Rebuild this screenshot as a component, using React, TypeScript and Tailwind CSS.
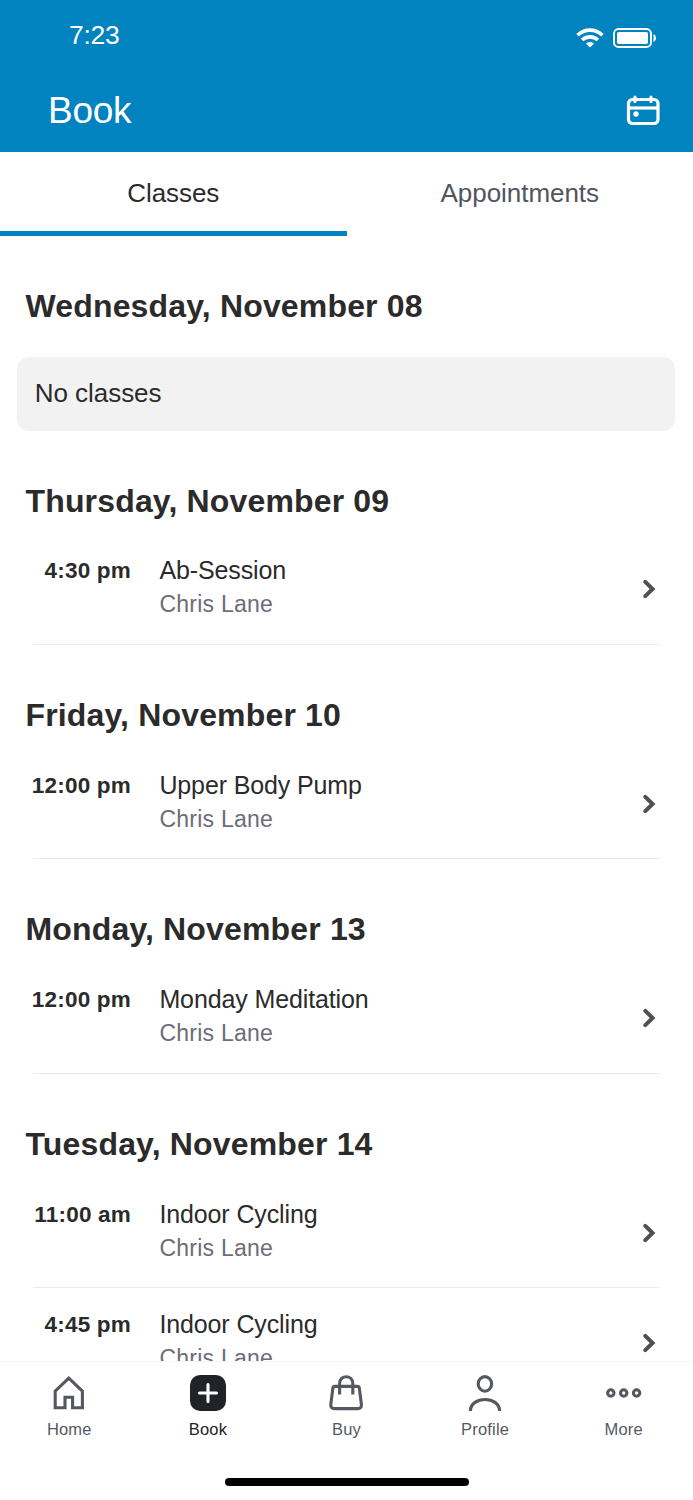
import type { ReactNode } from 'react'

type ClassItem = { time: string; name: string; teacher: string }
type Day = { label: string; classes: ClassItem[] }

const days: Day[] = [
  { label: 'Wednesday, November 08', classes: [] },
  {
    label: 'Thursday, November 09',
    classes: [{ time: '4:30 pm', name: 'Ab-Session', teacher: 'Chris Lane' }],
  },
  {
    label: 'Friday, November 10',
    classes: [{ time: '12:00 pm', name: 'Upper Body Pump', teacher: 'Chris Lane' }],
  },
  {
    label: 'Monday, November 13',
    classes: [{ time: '12:00 pm', name: 'Monday Meditation', teacher: 'Chris Lane' }],
  },
  {
    label: 'Tuesday, November 14',
    classes: [
      { time: '11:00 am', name: 'Indoor Cycling', teacher: 'Chris Lane' },
      { time: '4:45 pm', name: 'Indoor Cycling', teacher: 'Chris Lane' },
    ],
  },
]

export default function App() {
  return (
    <div className="flex h-[1500px] w-[693px] flex-col overflow-hidden bg-white font-['Liberation_Sans',Arial,sans-serif] text-[#2b2b2b]">
      <Header />

      {/* Tabs */}
      <div className="grid h-[84px] shrink-0 grid-cols-2 text-center text-[26px] leading-[75px] tracking-[-0.05px]">
        <div className="border-b-[5px] border-[#0183bf] pt-[4px]">Classes</div>
        <div className="pt-[4px] text-[#52545f]">Appointments</div>
      </div>

      {/* Schedule, cut off by the bottom bar */}
      <main className="min-h-0 flex-1 overflow-hidden">
        {days.map((day) => (
          <DaySection key={day.label} day={day} />
        ))}
      </main>

      <BottomNav />
    </div>
  )
}

function Header() {
  return (
    <header className="flex h-[152px] shrink-0 flex-col bg-[#0183bf] text-white">
      <div className="flex h-[72px] items-center justify-between pr-[36px] pl-[69px]">
        <span className="pb-[2px] text-[26.5px] leading-[68px] tracking-[-0.3px]">7:23</span>
        <div className="flex items-center gap-[9px] pt-[4px]">
          <svg width="28" height="20" viewBox="0 0 28 20" fill="none" stroke="currentColor" strokeWidth="3.6">
            <path d="M1.6 7.2C8.4 0.4 19.6 0.4 26.4 7.2" />
            <path d="M6.1 12C10.5 7.8 17.5 7.8 21.9 12" />
            <path d="M14 19.6L9.9 15.5C12.2 13.4 15.8 13.4 18.1 15.5Z" fill="currentColor" stroke="none" />
          </svg>
          <svg width="44" height="20" viewBox="0 0 44 20" fill="none">
            <rect x="1" y="1" width="37" height="18" rx="4.5" stroke="currentColor" strokeWidth="1.9" />
            <rect x="4" y="4" width="31" height="12" rx="1.8" fill="currentColor" />
            <path d="M40.5 6C43.8 7.5 43.8 12.5 40.5 14Z" fill="currentColor" />
          </svg>
        </div>
      </div>
      <div className="flex h-[80px] items-center justify-between pr-[33px] pl-[48px]">
        <h1 className="pb-[3px] text-[37px] leading-[73px] tracking-[-0.3px]">Book</h1>
        <svg width="34" height="32" viewBox="0 0 34 32" fill="none" stroke="currentColor" strokeWidth="3.2" className="mb-[5px]">
          <rect x="2.5" y="5.5" width="29.5" height="24" rx="4" />
          <path d="M3 14H32" />
          <path d="M9 3.2V7.4M25 3.2V7.4" strokeLinecap="round" />
          <circle cx="10" cy="20" r="2.7" fill="currentColor" stroke="none" />
        </svg>
      </div>
    </header>
  )
}

function DaySection({ day }: { day: Day }) {
  return (
    <section>
      <h2 className="pt-[50px] pl-[25.5px] text-[32px] leading-[40px] font-bold tracking-[0.16px]">{day.label}</h2>
      {day.classes.length === 0 ? (
        <div className="mt-[31px] mr-[17.6px] ml-[17.4px] h-[73.5px] rounded-xl bg-[#f2f2f2] pl-[17.4px] text-[26px] leading-[73px] tracking-[-0.05px]">
          No classes
        </div>
      ) : (
        <div className="mx-[33px] pt-[13.9px]">
          {day.classes.map((item) => (
            <ClassRow key={item.time} item={item} />
          ))}
        </div>
      )}
    </section>
  )
}

function ClassRow({ item }: { item: ClassItem }) {
  return (
    <div className="flex h-[110.5px] border-b border-[#ebebeb] pt-[20px]">
      <div className="-ml-[3px] w-[101px] text-right text-[22.5px] leading-[33px] font-bold tracking-[0.2px] whitespace-nowrap">{item.time}</div>
      <div className="ml-[28.4px] flex-1">
        <div className="text-[25px] leading-[33px] tracking-[-0.12px]">{item.name}</div>
        <div className="text-[23px] leading-[34px] tracking-[0.25px] text-[#6c6d78]">{item.teacher}</div>
      </div>
      <svg
        width="13"
        height="20"
        viewBox="0 0 13 20"
        fill="none"
        stroke="#4f5054"
        strokeWidth="4"
        strokeLinecap="round"
        strokeLinejoin="miter"
        className="mt-[25px] mr-[4px]"
      >
        <path d="M2.3 2.8L9.6 10L2.3 17.2" />
      </svg>
    </div>
  )
}

function BottomNav() {
  return (
    <nav className="flex h-[139px] shrink-0 flex-col items-center border-t border-[#f6f6f7] bg-white">
      <div className="grid w-full grid-cols-5 text-[#565861]">
        <NavItem label="Home">
          <path d="M4.2 16.2L17.8 3.2L31.4 16.2V32.8H21.6V22.3H14V32.8H4.2Z" />
        </NavItem>
        <NavItem label="Book" active>
          <rect width="36" height="36" rx="10" fill="#222328" stroke="none" />
          <path d="M18 9.5V26.5M9.5 18H26.5" stroke="white" strokeLinecap="round" />
        </NavItem>
        <NavItem label="Buy">
          <path d="M6.8 11.4H29.4Q31 11.4 31.3 13L33.4 29.4Q33.7 33.6 29.8 33.6H6.4Q2.5 33.6 2.8 29.4L4.9 13Q5.2 11.4 6.8 11.4Z" />
          <path d="M11.6 19.4V8.4C11.6 -0.5 24.8 -0.5 24.8 8.4V19.4" />
        </NavItem>
        <NavItem label="Profile">
          <ellipse cx="17.9" cy="8.9" rx="6.7" ry="7.3" />
          <path d="M3.4 36C3.4 20.7 32.6 20.7 32.6 36" />
        </NavItem>
        <NavItem label="More">
          <circle cx="4.8" cy="18" r="3.2" />
          <circle cx="17.7" cy="18" r="3.2" />
          <circle cx="30.6" cy="18" r="3.2" />
        </NavItem>
      </div>
      <div className="mt-[36px] h-[8px] w-[244px] rounded-full bg-black" />
    </nav>
  )
}

function NavItem({ label, active = false, children }: { label: string; active?: boolean; children: ReactNode }) {
  return (
    <div className="flex flex-col items-center pt-[13px]">
      <svg width="36" height="36" viewBox="0 0 36 36" fill="none" stroke="currentColor" strokeWidth="3.1">
        {children}
      </svg>
      <span
        className={
          active
            ? 'mt-[7px] pb-[2px] text-[16.5px] leading-[22px] tracking-[0.2px] text-[#222328]'
            : 'mt-[7px] pb-[2px] text-[16.5px] leading-[22px] tracking-[0.2px]'
        }
      >
        {label}
      </span>
    </div>
  )
}
